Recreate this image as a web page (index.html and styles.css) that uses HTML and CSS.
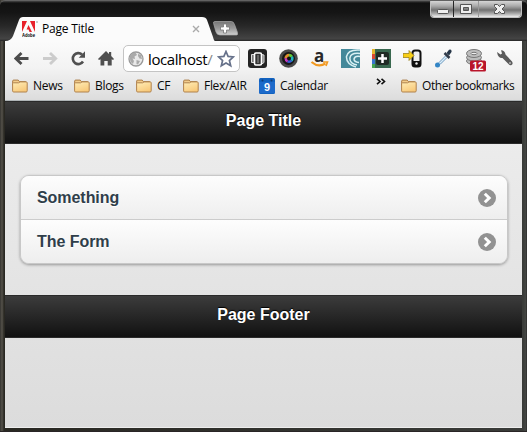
FILE: index.html
```html
<!DOCTYPE html>
<html lang="en">
<head>
<meta charset="utf-8">
<title>Page Title</title>
<link rel="stylesheet" href="styles.css">
</head>
<body>
<svg width="0" height="0" class="defs" aria-hidden="true">
  <defs>
    <linearGradient id="fold" x1="0" y1="0" x2="0.5" y2="1"><stop offset="0" stop-color="#ffeeb8"/><stop offset="1" stop-color="#f8ca7c"/></linearGradient>
    <linearGradient id="plus" x1="0" y1="0" x2="0" y2="1"><stop offset="0" stop-color="#777"/><stop offset=".5" stop-color="#999"/><stop offset="1" stop-color="#d0d0d0"/></linearGradient>
    <symbol id="folder" viewBox="0 0 16 14"><path d="M.7 4V2q0-.9 1-.9h4.500L7.500 2.700H13q1.300 0 1.300 1V6H.7z" fill="#f3cd8c" stroke="#a97b45"/><path d="M.6 4.500q0-.7.8-.7h5.200L8 2.900h6.200q1 0 1 .8v8q0 1.300-1.100 1.300H1.700q-1.100 0-1.100-1.100z" fill="url(#fold)" stroke="#b0824d"/></symbol>
    <symbol id="arrow" viewBox="0 0 18 18"><circle cx="9" cy="9" r="9" fill="#929292"/><path d="M6.800 4.700 11.200 9l-4.400 4.300" fill="none" stroke="#fff" stroke-width="3"/></symbol>
  </defs>
</svg>
<div class="window">
  <header class="titlebar">
    <div class="tab">
      <svg class="tab-shape" width="210" height="25" viewBox="0 0 210 25"><path d="M0 25v-1q6 0 8-5L14 3q1-3 4-3h179q4 0 5 3l6 17q1 4 2 4v1z" fill="#fbfbfb"/></svg>
      <svg class="favicon" width="17" height="17" viewBox="0 0 17 17"><path d="M0 0h5L0 11zM8 0h5v11zM6.500 4 10 11H7.500L6.500 8.500H4.600z" fill="#e8202a"/><path d="M14 1h2" stroke="#888" stroke-width=".8"/><text x="0" y="15.500" textLength="13" lengthAdjust="spacingAndGlyphs" class="adobe">Adobe</text></svg>
      <span class="tab-title">Page Title</span>
      <svg class="close" width="8" height="8" viewBox="0 0 8 8"><path d="m1 1 6 6M7 1 1 7" stroke="#aaa" stroke-width="1.400"/></svg>
    </div>
    <svg class="new-tab" width="25" height="15" viewBox="0 0 25 15"><path d="M2 .5h16.500q2 0 3 3l3 8q.8 2.500-1 2.500H7q-3 0-4-3L.6 2.500Q0 .5 2 .5z" fill="url(#plus)" stroke="#aaa" stroke-width=".7"/><path d="M10.500 3h3v3h3v3h-3v3h-3V9h-3V6h3z" fill="#fff" stroke="#777" stroke-width=".8"/></svg>
    <div class="controls">
      <span class="control small"><svg width="24" height="16" viewBox="0 0 24 16"><rect x="6.500" y="8.500" width="11" height="4" rx="1" fill="#eee" stroke="#555"/></svg></span>
      <span class="control mid"><svg width="24" height="16" viewBox="0 0 24 16"><path d="M6.500 3.500h11v9h-11zM9.500 6.500v3h5v-3z" fill="#eee" stroke="#555" fill-rule="evenodd"/></svg></span>
      <span class="control wide"><svg width="41" height="16" viewBox="0 0 41 16"><path d="M15.500 3.500h3l2 2 2-2h3v2L23 8l2.500 2.500v2h-3l-2-2-2 2h-3v-2L18 8l-2.500-2.500z" fill="#eee" stroke="#555"/></svg></span>
    </div>
  </header>
  <div class="chrome">
    <div class="toolbar">
      <nav class="nav">
        <svg width="16" height="16" viewBox="0 0 16 16"><path d="M7.500 2 1.800 7.500l5.700 5.500M2 7.500h12.500" fill="none" stroke="#4c4c4c" stroke-width="2.800"/></svg>
        <svg width="16" height="16" viewBox="0 0 16 16"><path d="m8 2 5.700 5.500L8 13M13.500 7.500H1" fill="none" stroke="#ccc" stroke-width="2.800"/></svg>
        <svg width="16" height="16" viewBox="0 0 16 16"><path d="M13 10.500A5.500 5.500 0 1 1 12 3.500" fill="none" stroke="#505050" stroke-width="2.600"/><path d="M15 .3v6.400H8.700z" fill="#505050"/></svg>
        <svg width="16" height="16" viewBox="0 0 16 16"><path d="M0 8 8 0l3 3V1h2.200v4L16 8l-1 1-1.300-.8V14.500H9.700V10H6.300v4.500H2.500V8.200L1 9z" fill="#505050"/></svg>
      </nav>
      <div class="omnibox">
        <svg width="16" height="16" viewBox="0 0 16 16"><circle cx="8" cy="8" r="7" fill="#e9e9e9" stroke="#999" stroke-width="1.300"/><path d="M2 5q2-3.500 5.500-3.500L9 4 6.500 5.500 7 8 4.500 7.500 6 10 5 13Q1 10 2 5zM10 3l3 1 1 4-2.500-.5L10 5zM8.500 9l3.500 1-2 3.500-1.500-.5z" fill="#aaa"/></svg>
        <span class="url">localhost<i>/</i></span>
        <svg class="star" width="18" height="18" viewBox="0 0 18 18"><path d="m9 1.500 2.100 4.900 5.300.5-4 3.600 1.300 5.300L9 13.100l-4.700 2.700 1.300-5.300-4-3.600 5.300-.5z" fill="#fff" stroke="#66718a" stroke-width="1.700"/></svg>
      </div>
      <div class="extensions">
        <svg width="20" height="20" viewBox="0 0 20 20"><rect width="19" height="19" rx="3" fill="#242424"/><path d="M3.500 5.500h3v8h-3zM13.500 5.500l2.500.5v7.500l-3 2z" fill="#777" stroke="#ddd"/><rect x="6.500" y="4" width="7" height="12" rx="1.500" fill="#333" stroke="#fff" stroke-width="1.600"/><path d="M10 6v8" stroke="#999"/></svg>
        <svg width="20" height="20" viewBox="0 0 20 20"><circle cx="9.500" cy="9.500" r="9.300" fill="#494949"/><circle cx="9.500" cy="9.500" r="6.500" fill="#161616"/><path d="M10 9.500V4.800A5 5 0 0 1 14 7z" fill="#65cb37"/><path d="m10 9.500 4-2.500a5 5 0 0 1-.6 5.500z" fill="#20b5bf"/><path d="m10 9.500 3.400 3A5 5 0 0 1 8 13.500z" fill="#365ed2"/><path d="m10 9.500-2 4a5 5 0 0 1-2.600-4.500z" fill="#c63ac4"/><path d="M10 9.500 5.400 9a5 5 0 0 1 4.600-4.200z" fill="#dc8b2c"/><circle cx="10" cy="9.500" r="2" fill="#111"/></svg>
        <svg width="20" height="20" viewBox="0 0 20 20"><text x="4" y="12.500" class="amazon">a</text><path d="M1.500 13q7 6 14 1.500" fill="none" stroke="#f29a22" stroke-width="2.200"/><path d="M13 13h4.500l-1.500 4" fill="none" stroke="#f29a22" stroke-width="1.600"/></svg>
        <svg width="20" height="20" viewBox="0 0 20 20"><rect width="19" height="19" fill="#44899a"/><path d="M19 1Q7 0 5.500 7.500 5 15 15 18M19 4.500q-9-1-10 4-1 6 7 7.500M19 7.500q-5-1-6 2.500 0 3 5 3.500" fill="none" stroke="#d9f1f4" stroke-width="1.500"/></svg>
        <svg width="20" height="20" viewBox="0 0 20 20"><rect width="19" height="19" fill="#39684f"/><path d="M0 0h3v5H0z" fill="#e6b82d"/><path d="M0 5h3v5H0z" fill="#da4934"/><path d="M0 10h3v5H0z" fill="#3976cd"/><path d="M0 15h3v4H0z" fill="#42a552"/><rect x="4" y="3" width="13" height="13" rx="2" fill="#202b25"/><path d="M10.500 5v9M6 9.500h9" stroke="#fff" stroke-width="2.500"/></svg>
        <svg width="20" height="20" viewBox="0 0 20 20"><rect x="9.500" y="1.500" width="8" height="16" rx="2.500" fill="#eee" stroke="#111" stroke-width="2"/><path d="M10 12h7v5h-7z" fill="#111"/><circle cx="13.500" cy="14.500" r="1.200" fill="#eee"/><path d="M0 4.500h6V1.500l5 5-5 5v-3H0z" fill="#f7ce17" stroke="#8d7415" stroke-width=".7"/></svg>
        <svg width="20" height="20" viewBox="0 0 20 20"><path d="m11.500 7-6.500 6.500-1.500 3 3-1.500 6.500-6.500" fill="#dbeefa" stroke="#6d9ac0"/><path d="m10.500 4 5 5" stroke="#303b49" stroke-width="2.500"/><path d="m12.500 4 2.500-3.200q3-1 2.500 2.200L15 6.500z" fill="#263647"/><circle cx="3.500" cy="16" r="2.500" fill="#3385c5"/></svg>
        <svg width="24" height="24" viewBox="0 0 24 24"><g fill="#bdbdbd" stroke="#777"><ellipse cx="9" cy="12" rx="7.500" ry="3.500"/><ellipse cx="9" cy="8.500" rx="7.500" ry="3.500"/><ellipse cx="9" cy="4.500" rx="7.500" ry="4"/><ellipse cx="9" cy="4.500" rx="3" ry="1.200" fill="#eee"/></g><rect x="5" y="11.500" width="16" height="11" rx="1.500" fill="#b9152b"/><text x="7.500" y="20.700" class="count">12</text></svg>
        <svg class="wrench" width="18" height="18" viewBox="0 0 18 18"><path d="M1 2 4.500 4.500 6 3.500 5 .3Q9 .5 9.500 4.500L16 11.500q1.500 2.500-.5 3.500-1.500.8-3-1L6.500 8Q2 8.500 1 2z" fill="#5b5b5b"/><circle cx="14" cy="13" r=".8" fill="#eee"/></svg>
      </div>
    </div>
    <div class="bookmarks">
      <span class="bm news"><svg width="16" height="14"><use href="#folder"/></svg><b>News</b></span>
      <span class="bm blogs"><svg width="16" height="14"><use href="#folder"/></svg><b>Blogs</b></span>
      <span class="bm cf"><svg width="16" height="14"><use href="#folder"/></svg><b>CF</b></span>
      <span class="bm flex"><svg width="16" height="14"><use href="#folder"/></svg><b>Flex/AIR</b></span>
      <span class="bm cal"><svg width="16" height="16" viewBox="0 0 16 16"><rect width="16" height="16" rx="1.500" fill="#1262bf"/><path d="M0 4h16v11H0z" fill="#1d6aca"/><circle cx="3.500" cy="2.500" r="1" fill="#153a70"/><circle cx="12.500" cy="2.500" r="1" fill="#153a70"/><text x="5" y="13" class="day">9</text></svg><b>Calendar</b></span>
      <svg class="more" width="10" height="8" viewBox="0 0 10 8"><path d="m1 .8 3 2.700-3 2.700M5.500.8l3 2.700-3 2.700" fill="none" stroke="#111" stroke-width="1.600"/></svg>
      <span class="sep"></span>
      <span class="bm other"><svg width="16" height="14"><use href="#folder"/></svg><b>Other bookmarks</b></span>
    </div>
  </div>
  <main class="page">
    <h1 class="bar">Page Title</h1>
    <ul class="list">
      <li><span>Something</span><svg width="18" height="18"><use href="#arrow"/></svg></li>
      <li><span>The Form</span><svg width="18" height="18"><use href="#arrow"/></svg></li>
    </ul>
    <h4 class="bar">Page Footer</h4>
  </main>
</div>
</body>
</html>
```
FILE: styles.css
```css
* { box-sizing: border-box; }
body { margin: 0; background: #383a37; font-family: "Open Sans", "Noto Sans", sans-serif; overflow: hidden; }
svg { display: block; flex: none; }
.defs { position: absolute; }
.window { width: 527px; height: 432px; padding: 0 4px 4px 5px; background: linear-gradient(90deg, #34332f 0, #55524b 2px, #292822 4px, #292822 5px, #3a3c39 523px, #454744 526px, #222 527px); border-bottom: 1px solid #292526; }
.titlebar { display: flex; height: 41px; margin: 0 -4px 0 -5px; padding-left: 5px; border-top: 1px solid #626262; background: linear-gradient(#484848 0, #111 2px, #151515 12px, #282828 25px, #444 38px, #242424 40px); border-radius: 5px 5px 0 0; }
.tab { position: relative; display: flex; width: 210px; height: 25px; margin-top: 16px; padding-left: 17px; }
.tab-shape { position: absolute; left: 0; top: 0; }
.favicon { position: relative; margin-top: 4px; }
.adobe { font: bold 5px "Liberation Sans", sans-serif; }
.tab-title { position: relative; width: 54px; margin-left: 3px; font-size: 12px; line-height: 24px; letter-spacing: -.2px; white-space: nowrap; }
.close { position: relative; margin: 8px 0 0 96px; }
.new-tab { margin: 20px 0 0 -2px; }
.controls { display: flex; height: 17px; margin-left: auto; margin-right: 5px; border-radius: 0 0 4px 4px; overflow: hidden; border: 1px solid #c2c2c2; border-top: 0; width: 92px; }
.control { background: linear-gradient(#d6d6d6, #aaa 5px, #717171 9px, #b2b2b2 13px, #eee 16px); border-right: 1px solid #262626; overflow: hidden; }
.small { width: 24px; }
.mid { width: 25px; border-color: #999; }
.wide { width: 43px; border: 0; }
.chrome { width: 517px; height: 60px; padding-top: 4px; background: linear-gradient(#fbfbfb, #f3f3f3 45%, #dcdcdc); border-bottom: 1px solid #aeb4b6; }
.toolbar { display: flex; height: 27px; padding-left: 9px; align-items: center; }
.nav { display: flex; gap: 12px; }
.omnibox { display: flex; align-items: center; width: 117px; height: 27px; margin-left: 9px; padding-left: 4px; background: #fff; border: 1px solid #c4c4c4; border-radius: 5px; }
.url { width: 67px; margin-left: 4px; font-size: 15px; line-height: 24px; letter-spacing: -.4px; white-space: nowrap; }
.url i { color: #888; font-style: normal; }
.star { margin-left: 2px; }
.extensions { display: flex; gap: 11px; height: 20px; margin-left: 8px; }
.amazon { font: bold 17px "Open Sans", sans-serif; fill: #292929; }
.count { font: bold 10px "Liberation Sans", sans-serif; fill: #fff; }
.wrench { margin-left: -4px; margin-top: 1px; }
.bookmarks { display: flex; align-items: center; height: 28px; padding-left: 7px; }
.bm { display: flex; align-items: center; gap: 5px; margin-right: 12px; height: 18px; flex: none; }
.bm b { font-weight: 400; font-size: 12px; line-height: 16px; letter-spacing: -.3px; white-space: nowrap; color: #080808; }
.news { width: 50px; }
.blogs { width: 50px; }
.cf { width: 35px; }
.flex { width: 64px; }
.cal { width: 69px; margin-right: 48px; }
.day { font: bold 11px "Liberation Sans", sans-serif; fill: #fff; }
.more { margin-bottom: 8px; }
.sep { width: 1px; height: 20px; margin: 0 7px 0 8px; background: #c5ced3; }
.other b { letter-spacing: -.42px; }
.page { width: 517px; height: 327px; background: linear-gradient(#eee, #dcdcdc); border-bottom: 1px solid #eee; font-family: "Liberation Sans", Arial, sans-serif; }
.bar { height: 43px; margin: 0; border: 1px solid #2a2a2a; border-width: 1px 0; background: linear-gradient(#3c3c3c, #111); color: #fff; font-size: 16px; line-height: 37px; text-align: center; text-shadow: 0 -1px 1px #000; }
.list { width: 488px; height: 89px; margin: 31px 0 31px 15px; padding: 0; list-style: none; border: 1px solid #c8c8c8; border-radius: 9px; overflow: hidden; box-shadow: 0 1px 3px rgba(0,0,0,.35); }
.list li { display: flex; align-items: center; justify-content: space-between; height: 43px; padding: 0 11px 0 16px; background: linear-gradient(#fdfdfd, #eee); color: #2f3e4a; font-size: 16px; letter-spacing: -.05px; font-weight: bold; text-shadow: 0 1px 1px #fff; }
.list li + li { height: 44px; border-top: 1px solid #ccc; }
```
